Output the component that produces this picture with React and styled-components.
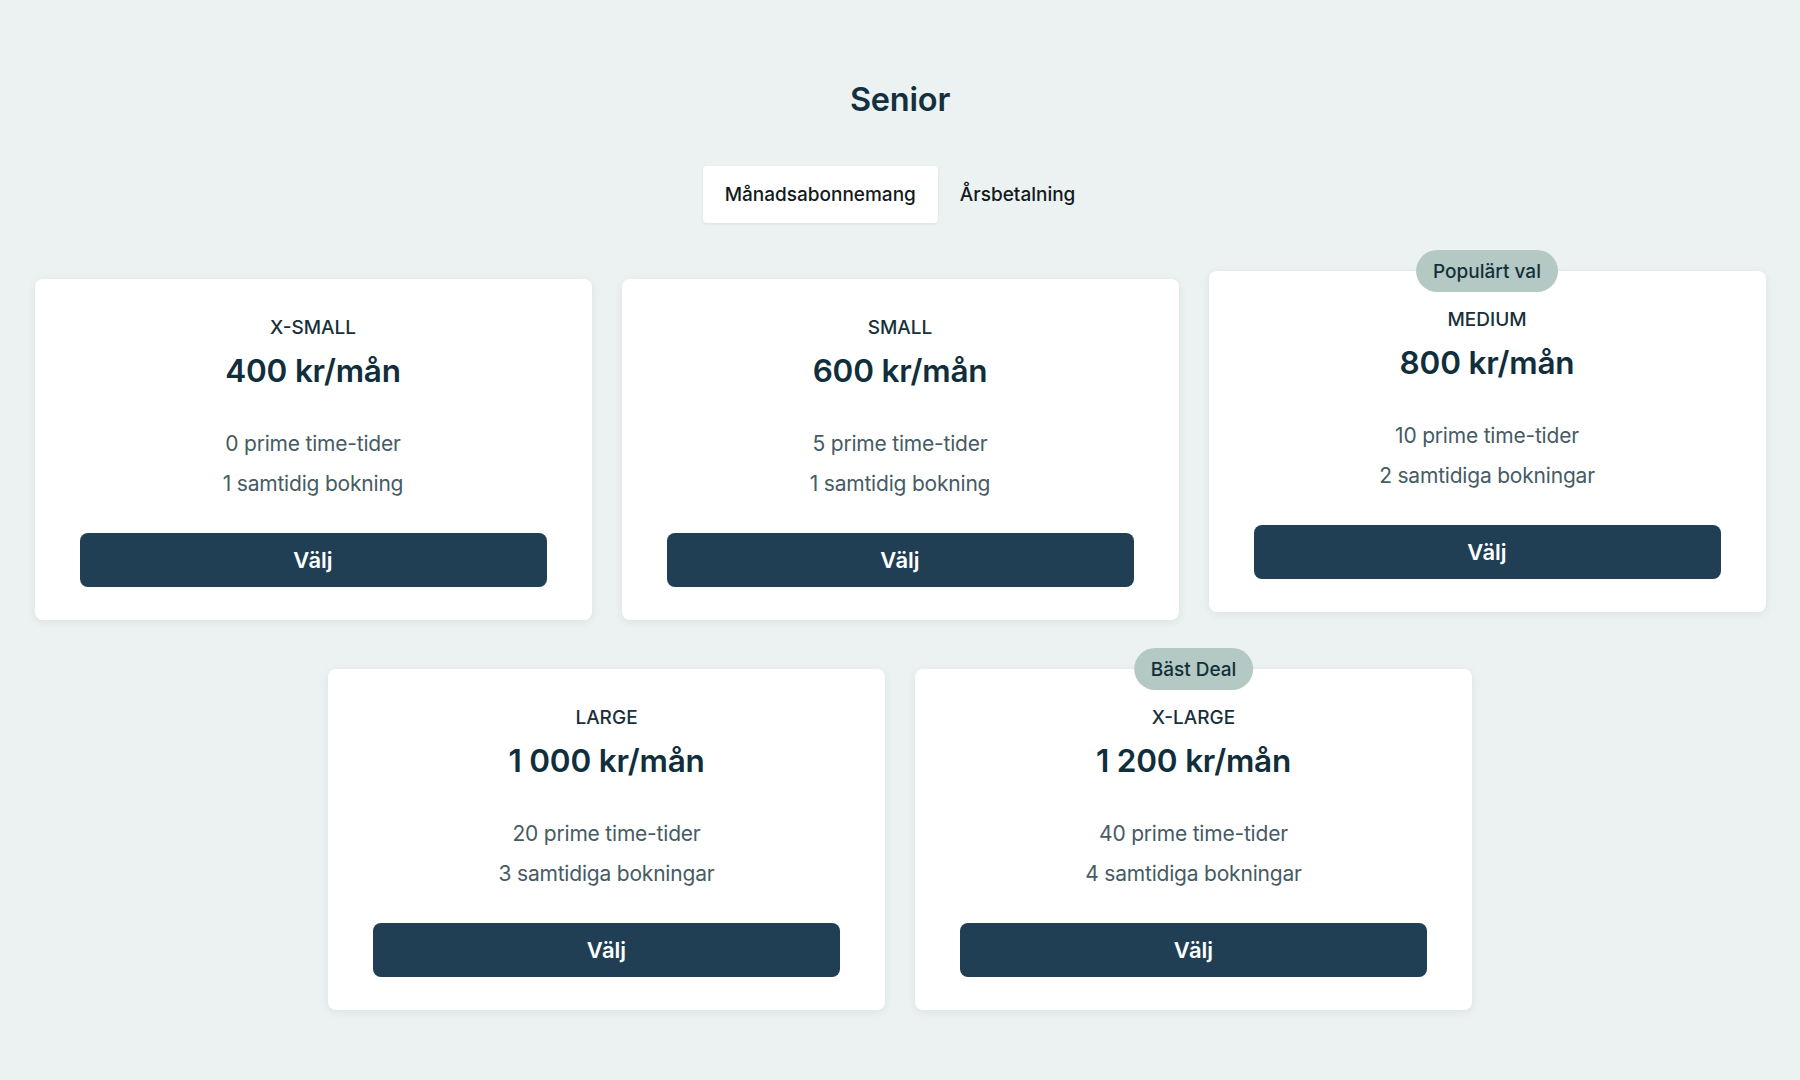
import React from "react";
import styled, { createGlobalStyle } from "styled-components";

const Global = createGlobalStyle`
  html, body { margin: 0; padding: 0; }
  body {
    background: #ecf1f1;
    font-family: Inter, "Noto Sans", "Liberation Sans", sans-serif;
    -webkit-font-smoothing: antialiased;
  }
`;

const Page = styled.main`
  min-height: 1080px;
  padding-top: 80px;
  box-sizing: border-box;
  display: flex;
  flex-direction: column;
  align-items: center;
`;

const Title = styled.h1`
  margin: 0;
  font-size: 32.5px;
  line-height: 40px;
  font-weight: 600;
  color: #12303d;
  letter-spacing: -0.2px;
`;

const Tabs = styled.div`
  display: flex;
  margin-top: 46px;
`;

const Tab = styled.button`
  border: none;
  font-family: inherit;
  font-size: 19px;
  font-weight: 500;
  color: #121a1d;
  height: 57px;
  padding: 0 22px;
  border-radius: 4px;
  cursor: pointer;
  background: ${(p) => (p.$active ? "#ffffff" : "transparent")};
  box-shadow: ${(p) => (p.$active ? "0 1px 3px rgba(20, 40, 50, 0.08)" : "none")};
`;

const Grid = styled.div`
  margin-top: 56px;
  width: 1732px;
  display: flex;
  flex-wrap: wrap;
  justify-content: center;
  gap: 49px 30px;
`;

const Card = styled.div`
  position: relative;
  width: 557px;
  box-sizing: border-box;
  background: #fff;
  border-radius: 8px;
  box-shadow: 0 2px 10px rgba(30, 60, 70, 0.07);
  padding: 36px 45px 33px;
  display: flex;
  flex-direction: column;
  align-items: center;
  transform: ${(p) => (p.$raised ? "translateY(-8px)" : "none")};
`;

const Badge = styled.span`
  position: absolute;
  top: -21px;
  left: 50%;
  transform: translateX(-50%);
  height: 42px;
  padding: 0 17px;
  border-radius: 21px;
  background: #b4c9c4;
  color: #12303a;
  font-size: 19px;
  font-weight: 500;
  display: flex;
  align-items: center;
  white-space: nowrap;
`;

const Plan = styled.div`
  font-size: 19px;
  line-height: 26px;
  font-weight: 500;
  color: #18303a;
  text-transform: uppercase;
`;

const Price = styled.div`
  margin-top: 10px;
  font-size: 31.5px;
  line-height: 40px;
  font-weight: 600;
  color: #102e3b;
  letter-spacing: -0.2px;
`;

const Features = styled.ul`
  list-style: none;
  margin: 33px 0 0;
  padding: 0;
  text-align: center;
`;

const Feature = styled.li`
  font-size: 21px;
  line-height: 40px;
  color: #465b64;
  letter-spacing: -0.2px;
`;

const Choose = styled.button`
  margin-top: 29px;
  width: 100%;
  height: 54px;
  border: none;
  border-radius: 8px;
  background: #203f55;
  color: #fff;
  font-family: inherit;
  font-size: 22px;
  font-weight: 600;
  cursor: pointer;
`;

const plans = [
  { name: "X-SMALL", price: "400 kr/mån", prime: 0, book: "1 samtidig bokning" },
  { name: "SMALL", price: "600 kr/mån", prime: 5, book: "1 samtidig bokning" },
  { name: "MEDIUM", price: "800 kr/mån", prime: 10, book: "2 samtidiga bokningar", badge: "Populärt val", raised: true },
  { name: "LARGE", price: "1 000 kr/mån", prime: 20, book: "3 samtidiga bokningar" },
  { name: "X-LARGE", price: "1 200 kr/mån", prime: 40, book: "4 samtidiga bokningar", badge: "Bäst Deal" },
];

export default function App() {
  return (
    <>
      <Global />
      <Page>
        <Title>Senior</Title>
        <Tabs>
          <Tab $active>Månadsabonnemang</Tab>
          <Tab>Årsbetalning</Tab>
        </Tabs>
        <Grid>
          {plans.map((p) => (
            <Card key={p.name} $raised={p.raised}>
              {p.badge && <Badge>{p.badge}</Badge>}
              <Plan>{p.name}</Plan>
              <Price>{p.price}</Price>
              <Features>
                <Feature>{p.prime} prime time-tider</Feature>
                <Feature>{p.book}</Feature>
              </Features>
              <Choose>Välj</Choose>
            </Card>
          ))}
        </Grid>
      </Page>
    </>
  );
}
